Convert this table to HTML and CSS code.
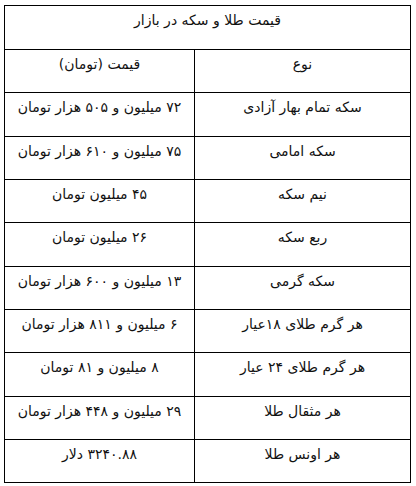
FILE: index.html
```html
<!DOCTYPE html>
<html lang="fa" dir="rtl">
<head>
<meta charset="utf-8">
<link rel="stylesheet" href="styles.css">
</head>
<body>
<table class="prices">
  <colgroup><col class="col-type"><col class="col-price"></colgroup>
  <tr class="title-row"><td colspan="2"><div class="cell">قیمت طلا و سکه در بازار</div></td></tr>
  <tr><td><div class="cell">نوع</div></td><td><div class="cell">قیمت (تومان)</div></td></tr>
  <tr><td><div class="cell">سکه تمام بهار آزادی</div></td><td><div class="cell">۷۲ میلیون و ۵۰۵ هزار تومان</div></td></tr>
  <tr><td><div class="cell">سکه امامی</div></td><td><div class="cell">۷۵ میلیون و ۶۱۰ هزار تومان</div></td></tr>
  <tr><td><div class="cell">نیم سکه</div></td><td><div class="cell">۴۵ میلیون تومان</div></td></tr>
  <tr><td><div class="cell">ربع سکه</div></td><td><div class="cell">۲۶ میلیون تومان</div></td></tr>
  <tr><td><div class="cell">سکه گرمی</div></td><td><div class="cell">۱۳ میلیون و ۶۰۰ هزار تومان</div></td></tr>
  <tr><td><div class="cell">هر گرم طلای ۱۸عیار</div></td><td><div class="cell">۶ میلیون و ۸۱۱ هزار تومان</div></td></tr>
  <tr><td><div class="cell">هر گرم طلای ۲۴ عیار</div></td><td><div class="cell">۸ میلیون و ۸۱ تومان</div></td></tr>
  <tr><td><div class="cell">هر مثقال طلا</div></td><td><div class="cell">۲۹ میلیون و ۴۴۸ هزار تومان</div></td></tr>
  <tr><td><div class="cell">هر اونس طلا</div></td><td><div class="cell">۳۲۴۰.۸۸ دلار</div></td></tr>
</table>
</body>
</html>
```
FILE: styles.css
```css
html, body {
  margin: 0;
  padding: 0;
  background: #fff;
}
body {
  padding: 5px 5px 0 5px;
  font-family: "DejaVu Sans", Tahoma, sans-serif;
  font-size: 14px;
  color: #111;
}
.prices {
  border-collapse: collapse;
  width: 406px;
  table-layout: fixed;
}
.prices td {
  border: 1px solid #000;
  padding: 0;
  vertical-align: top;
  text-align: center;
}
.col-type { width: 216px; }
.col-price { width: 190px; }
.cell {
  height: 42.33px;
  box-sizing: border-box;
  padding-top: 5px;
  line-height: 18px;
}
.title-row .cell {
  height: 43px;
}
```
